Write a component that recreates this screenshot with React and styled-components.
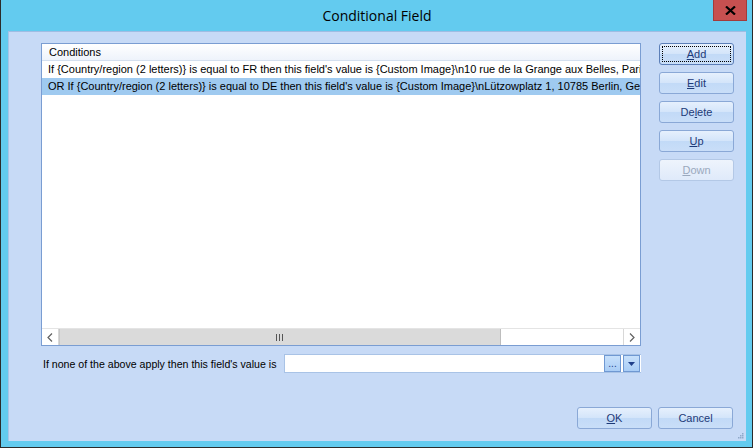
import React from 'react';
import styled, { createGlobalStyle } from 'styled-components';

const GlobalStyle = createGlobalStyle`
  html, body {
    margin: 0;
    padding: 0;
    background: #63cbef;
  }
  * { box-sizing: border-box; }
`;

const Frame = styled.div`
  width: 753px;
  height: 448px;
  background: #63cbef;
  border: 1px solid #2b2b2b;
  border-top: none;
  display: flex;
  flex-direction: column;
  padding: 0 6px 6px 7px;
  font-family: "Liberation Sans", Arial, sans-serif;
`;

const TitleBar = styled.div`
  height: 31px;
  flex: none;
  position: relative;
  display: flex;
  align-items: center;
  justify-content: center;
`;

const Title = styled.div`
  font-family: "Open Sans", "Noto Sans", sans-serif;
  font-size: 14px;
  color: #000;
  margin-top: -1px;
`;

const CloseButton = styled.div`
  position: absolute;
  top: 0;
  right: -1px;
  width: 34px;
  height: 21px;
  background: #c75050;
  border: 1px solid #a33b3b;
  border-top: none;
  display: flex;
  align-items: center;
  justify-content: center;
`;

const Client = styled.div`
  flex: 1;
  background: #c7daf6;
  border-top: 1px solid #9fbde3;
  border-left: 1px solid #a9c4e8;
  display: flex;
  flex-direction: column;
  padding: 11px 12px 12px 32px;
`;

const MainRow = styled.div`
  display: flex;
  gap: 18px;
`;

const LeftColumn = styled.div`
  flex: 1;
  min-width: 0;
  display: flex;
  flex-direction: column;
`;

const ListBox = styled.div`
  height: 303px;
  background: #fff;
  border: 1px solid #7a9dd2;
  display: flex;
  flex-direction: column;
  overflow: hidden;
`;

const Header = styled.div`
  height: 17px;
  flex: none;
  background: linear-gradient(#ffffff, #eef3fb);
  border-bottom: 1px solid #d3dfef;
  font-size: 11px;
  line-height: 16px;
  padding-left: 7px;
  color: #000;
`;

const Row = styled.div`
  height: 17px;
  line-height: 17px;
  font-size: 11px;
  color: #000;
  padding-left: 6px;
  white-space: nowrap;
  overflow: hidden;
  background: ${(p) => (p.selected ? '#9fcaf0' : 'transparent')};
`;

const Rows = styled.div`
  flex: 1;
`;

const ScrollBar = styled.div`
  height: 17px;
  flex: none;
  display: flex;
  border-top: 1px solid #e4e4e4;
  background: #fff;
`;

const ScrollArrow = styled.div`
  width: 17px;
  display: flex;
  align-items: center;
  justify-content: center;
  background: #fff;
  border-${(p) => p.side}: 1px solid #d8d8d8;
`;

const Thumb = styled.div`
  width: 442px;
  background: #dadada;
  border-right: 1px solid #bdbdbd;
  border-left: 1px solid #c8c8c8;
  display: flex;
  align-items: center;
  justify-content: center;
`;

const Track = styled.div`
  flex: 1;
`;

const NoneRow = styled.div`
  display: flex;
  align-items: center;
  margin-top: 8px;
  height: 19px;
`;

const Label = styled.div`
  font-size: 10.6px;
  color: #000;
  margin-left: 2px;
  width: 241px;
  flex: none;
  white-space: nowrap;
`;

const ValueInput = styled.div`
  flex: 1;
  height: 19px;
  background: #fff;
  border: 1px solid #a9c3e6;
  border-right: none;
  display: flex;
  justify-content: flex-end;
  align-items: center;
  padding-right: 1px;
  gap: 2px;
`;

const SmallButton = styled.div`
  width: 17px;
  height: 17px;
  background: linear-gradient(#c7e0fb, #a9cdf6);
  border: 1px solid #6f98d2;
  display: flex;
  align-items: center;
  justify-content: center;
  color: #1f3f8a;
  font-size: 10px;
  line-height: 1;
`;

const ButtonColumn = styled.div`
  width: 75px;
  flex: none;
  display: flex;
  flex-direction: column;
  gap: 7px;
`;

const Button = styled.div`
  width: 75px;
  height: 22px;
  flex: none;
  border-radius: 3px;
  border: 1px solid ${(p) => (p.focused ? '#5c7fb8' : p.disabled ? '#b3c8e6' : '#8aa8d6')};
  background: ${(p) =>
    p.disabled
      ? 'linear-gradient(#eef4fc, #dfeafa)'
      : 'linear-gradient(#e6f0fd 0%, #d4e5fa 48%, #c2daf7 52%, #c9def8 100%)'};
  color: ${(p) => (p.disabled ? '#9aa8bd' : '#1d3a78')};
  font-size: 11px;
  display: flex;
  align-items: center;
  justify-content: center;
  position: relative;

  &::after {
    content: '';
    display: ${(p) => (p.focused ? 'block' : 'none')};
    position: absolute;
    inset: 2px;
    border: 1px dotted #000;
  }

  u {
    text-decoration: underline;
    text-underline-offset: 1px;
  }
`;

const Footer = styled.div`
  margin-top: auto;
  display: flex;
  justify-content: flex-end;
  gap: 6px;
  padding-right: 1px;
  position: relative;
`;

const Grip = styled.svg`
  position: absolute;
  right: -10px;
  bottom: -10px;
`;

const rowText = [
  "If {Country/region (2 letters)} is equal to FR then this field's value is {Custom Image}\\n10 rue de la Grange aux Belles, Paris, France",
  "OR If {Country/region (2 letters)} is equal to DE then this field's value is {Custom Image}\\nLützowplatz 1, 10785 Berlin, Germany",
];

const App = () => {
  return (
    <>
      <GlobalStyle />
      <Frame>
        <TitleBar>
          <Title>Conditional Field</Title>
          <CloseButton>
            <svg width="11" height="9" viewBox="0 0 11 9">
              <path d="M1 0.5 L10 8.5 M10 0.5 L1 8.5" stroke="#000" strokeWidth="2.2" />
            </svg>
          </CloseButton>
        </TitleBar>
        <Client>
          <MainRow>
            <LeftColumn>
              <ListBox>
                <Header>Conditions</Header>
                <Rows>
                  <Row>{rowText[0]}</Row>
                  <Row selected>{rowText[1]}</Row>
                </Rows>
                <ScrollBar>
                  <ScrollArrow side="right">
                    <svg width="6" height="9" viewBox="0 0 6 9">
                      <path d="M5 0.5 L1 4.5 L5 8.5" stroke="#606060" strokeWidth="1.2" fill="none" />
                    </svg>
                  </ScrollArrow>
                  <Thumb>
                    <svg width="8" height="7" viewBox="0 0 8 7">
                      <path d="M0.5 0 V7 M3.5 0 V7 M6.5 0 V7" stroke="#555" strokeWidth="1" />
                    </svg>
                  </Thumb>
                  <Track />
                  <ScrollArrow side="left">
                    <svg width="6" height="9" viewBox="0 0 6 9">
                      <path d="M1 0.5 L5 4.5 L1 8.5" stroke="#606060" strokeWidth="1.2" fill="none" />
                    </svg>
                  </ScrollArrow>
                </ScrollBar>
              </ListBox>
              <NoneRow>
                <Label>If none of the above apply then this field's value is</Label>
                <ValueInput>
                  <SmallButton>...</SmallButton>
                  <SmallButton>
                    <svg width="7" height="4" viewBox="0 0 7 4">
                      <path d="M0 0 H7 L3.5 4 Z" fill="#1f3f8a" />
                    </svg>
                  </SmallButton>
                </ValueInput>
              </NoneRow>
            </LeftColumn>
            <ButtonColumn>
              <Button focused><span><u>A</u>dd</span></Button>
              <Button><span><u>E</u>dit</span></Button>
              <Button><span>De<u>l</u>ete</span></Button>
              <Button><span><u>U</u>p</span></Button>
              <Button disabled><span><u>D</u>own</span></Button>
            </ButtonColumn>
          </MainRow>
          <Footer>
            <Button><span><u>O</u>K</span></Button>
            <Button>Cancel</Button>
            <Grip width="7" height="7" viewBox="0 0 7 7">
              <rect x="5" y="1" width="1.5" height="1.5" fill="#8fa9c9" />
              <rect x="3" y="3" width="1.5" height="1.5" fill="#8fa9c9" />
              <rect x="5" y="3" width="1.5" height="1.5" fill="#8fa9c9" />
              <rect x="1" y="5" width="1.5" height="1.5" fill="#8fa9c9" />
              <rect x="3" y="5" width="1.5" height="1.5" fill="#8fa9c9" />
              <rect x="5" y="5" width="1.5" height="1.5" fill="#8fa9c9" />
            </Grip>
          </Footer>
        </Client>
      </Frame>
    </>
  );
};

export default App;
